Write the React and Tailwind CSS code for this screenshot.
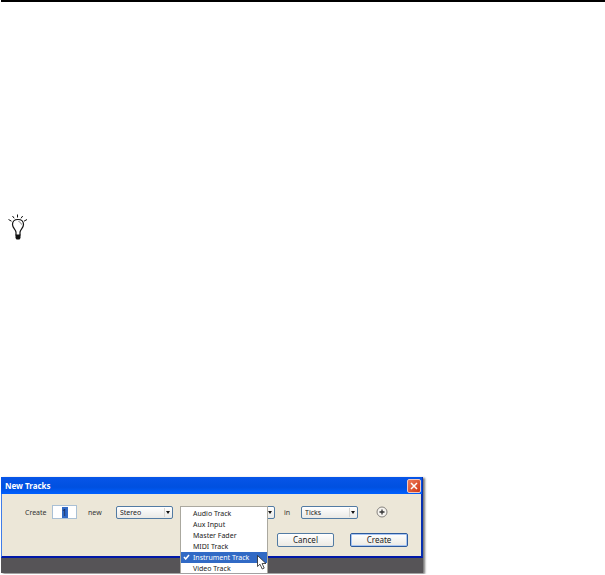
import React from "react";

const trackTypes = [
  "Audio Track",
  "Aux Input",
  "Master Fader",
  "MIDI Track",
  "Instrument Track",
  "Video Track",
];

function TipIcon() {
  return (
    <svg
      className="block h-7 w-5"
      viewBox="0 0 20 28"
      fill="none"
      stroke="#111"
      strokeWidth="1.2"
      role="img"
      aria-label="Tip"
    >
      <path d="M8 21.500V18.500C8 15.500 4.500 14 4.500 10.500C4.500 7.300 7 5.500 10 5.500S15.500 7.300 15.500 10.500C15.500 14 12 15.500 12 18.500v3" />
      <path
        d="M9.500 0.500v3M4.500 2l1.700 2.300M14.700 2l-1.700 2.300M0.500 5.500l3 1.700M19 5.500l-3 1.700"
        strokeWidth="1"
      />
      <path d="M10.500 7.500c1.500 .4 2.500 1.500 3 3" stroke="#777" strokeWidth="1" />
      <path d="M7.500 20.500h5v3.500l-1 1.500h-3l-1-1.500z" fill="#111" stroke="none" />
    </svg>
  );
}

function Dropdown({ label, value, options }) {
  return (
    <div className="relative h-[13px] w-[57px] shrink-0">
      <select
        aria-label={label}
        defaultValue={value}
        className="block h-full w-full appearance-none rounded-[2px] border border-[#527ba3] bg-linear-to-b from-white to-[#e9e9e6] pl-[3px] text-[7px] leading-[11px] text-[#222]"
      >
        {options.map((option) => (
          <option key={option}>{option}</option>
        ))}
      </select>
      <svg
        className="pointer-events-none absolute top-px right-px h-[11px] w-[8px]"
        viewBox="0 0 8 11"
      >
        <path d="M0.500 1v9" stroke="#d5d5d2" />
        <path d="M2 4h4L4 7z" fill="#111" />
      </svg>
    </div>
  );
}

function TrackMenu() {
  return (
    <div
      role="listbox"
      aria-label="Track types"
      className="absolute top-0 left-0 z-10 h-[67px] w-[88px] overflow-hidden border border-b-0 border-[#aaa89f] bg-white pt-px"
    >
      {trackTypes.map((type) => {
        const selected = type === "Instrument Track";
        return (
          <button
            key={type}
            type="button"
            role="option"
            aria-selected={selected}
            className={
              selected
                ? "flex h-[11px] w-full items-center bg-[#316ac5] pl-[2px] text-left text-[7px] leading-[11px] whitespace-nowrap text-white"
                : "flex h-[11px] w-full items-center pl-[2px] text-left text-[7px] leading-[11px] whitespace-nowrap text-[#222]"
            }
          >
            <span className="w-[10px] shrink-0">
              {selected && (
                <svg className="h-[6px] w-[7px]" viewBox="0 0 7 6" fill="none">
                  <path d="M1 3l1.700 2L6 1" stroke="white" strokeWidth="1.500" />
                </svg>
              )}
            </span>
            {type}
          </button>
        );
      })}
    </div>
  );
}

function Pointer() {
  return (
    <svg
      className="pointer-events-none absolute top-[49px] left-[77px] z-20 h-[15px] w-[10px]"
      viewBox="0 0 10 15"
    >
      <path
        d="M0.500 0.500v11l2.500-2.300 2.200 4.800 2-.9-2.100-4.600h3.900z"
        fill="white"
        stroke="#222"
        strokeWidth="0.800"
      />
    </svg>
  );
}

function NewTracksDialog() {
  return (
    <section
      aria-label="New Tracks"
      className="w-full max-w-[422px] bg-[#565457] pb-[15px] shadow-[2px_1px_2px_#777]"
    >
      <header className="flex h-[17px] items-center justify-between border-r border-[#0831b0] bg-linear-to-b from-[#0755e8] via-[#0050e0] via-60% to-[#0060ff] pr-px pl-1">
        <h1 className="text-[8px] leading-[12px] font-bold text-white">New Tracks</h1>
        <button
          type="button"
          aria-label="Close"
          className="flex h-[14px] w-[14px] items-center justify-center rounded-[2px] border border-[#f3c8bd] bg-linear-to-br from-[#ee7a58] to-[#cf3510]"
        >
          <svg className="h-2 w-2" viewBox="0 0 8 8">
            <path d="M1 1l6 6M7 1l-6 6" stroke="white" strokeWidth="1.500" />
          </svg>
        </button>
      </header>
      <form
        className="h-[64px] border-r-2 border-b-2 border-l border-r-[#0831b0] border-b-[#0018a8] border-l-[#3f7de8] bg-[#ece7d8] pt-[11px] text-[7px] leading-[11px] text-[#333]"
        onSubmit={(event) => event.preventDefault()}
      >
        <div className="flex h-[14px] items-center pl-[23px]">
          <label htmlFor="track-count" className="w-[27px]">
            Create
          </label>
          <div className="flex h-[14px] w-[25px] items-center justify-center border border-[#a9c0d5] bg-white">
            <input
              id="track-count"
              defaultValue="1"
              className="h-[11px] w-[6px] bg-[#316ac5] text-center text-[8px] text-[#102050] outline-none"
            />
          </div>
          <span className="w-[39px] pl-[11px]">new</span>
          <Dropdown label="Format" value="Stereo" options={["Mono", "Stereo"]} />
          <div className="relative ml-[7px] flex w-[95px] justify-end">
            <Dropdown label="Track type" value="" options={["", ...trackTypes]} />
            <TrackMenu />
            <Pointer />
          </div>
          <span className="w-[26px] pl-[9px]">in</span>
          <Dropdown label="Timebase" value="Ticks" options={["Samples", "Ticks"]} />
          <button type="button" aria-label="Add row" className="ml-[18px]">
            <svg className="block h-[12px] w-[12px]" viewBox="0 0 12 12">
              <circle cx="6" cy="6" r="5" fill="#f6f4ef" stroke="#85827d" />
              <path d="M6 3.500v5M3.500 6h5" stroke="#333" strokeWidth="1.300" />
            </svg>
          </button>
        </div>
        <div className="flex justify-end gap-4 pt-[14px] pr-[13px] text-[8px] leading-[12px] text-[#222]">
          <button
            type="button"
            className="h-[14px] w-[57px] rounded-[2px] border border-[#527ba3] bg-linear-to-b from-white to-[#eceae4]"
          >
            Cancel
          </button>
          <button
            type="submit"
            className="h-[14px] w-[58px] rounded-[2px] border border-[#2c5a9c] bg-linear-to-b from-white to-[#eceae4] shadow-[inset_0_0_0_1px_#a9c6f3]"
          >
            Create
          </button>
        </div>
      </form>
    </section>
  );
}

export default function App() {
  return (
    <main className="overflow-hidden bg-white pb-px pl-px font-['Noto_Sans','Open_Sans',sans-serif]">
      <hr className="h-0 border-t-2 border-black" />
      <div className="pt-[212px] pl-[7px]">
        <TipIcon />
      </div>
      <div className="pt-[235px]">
        <NewTracksDialog />
      </div>
    </main>
  );
}
